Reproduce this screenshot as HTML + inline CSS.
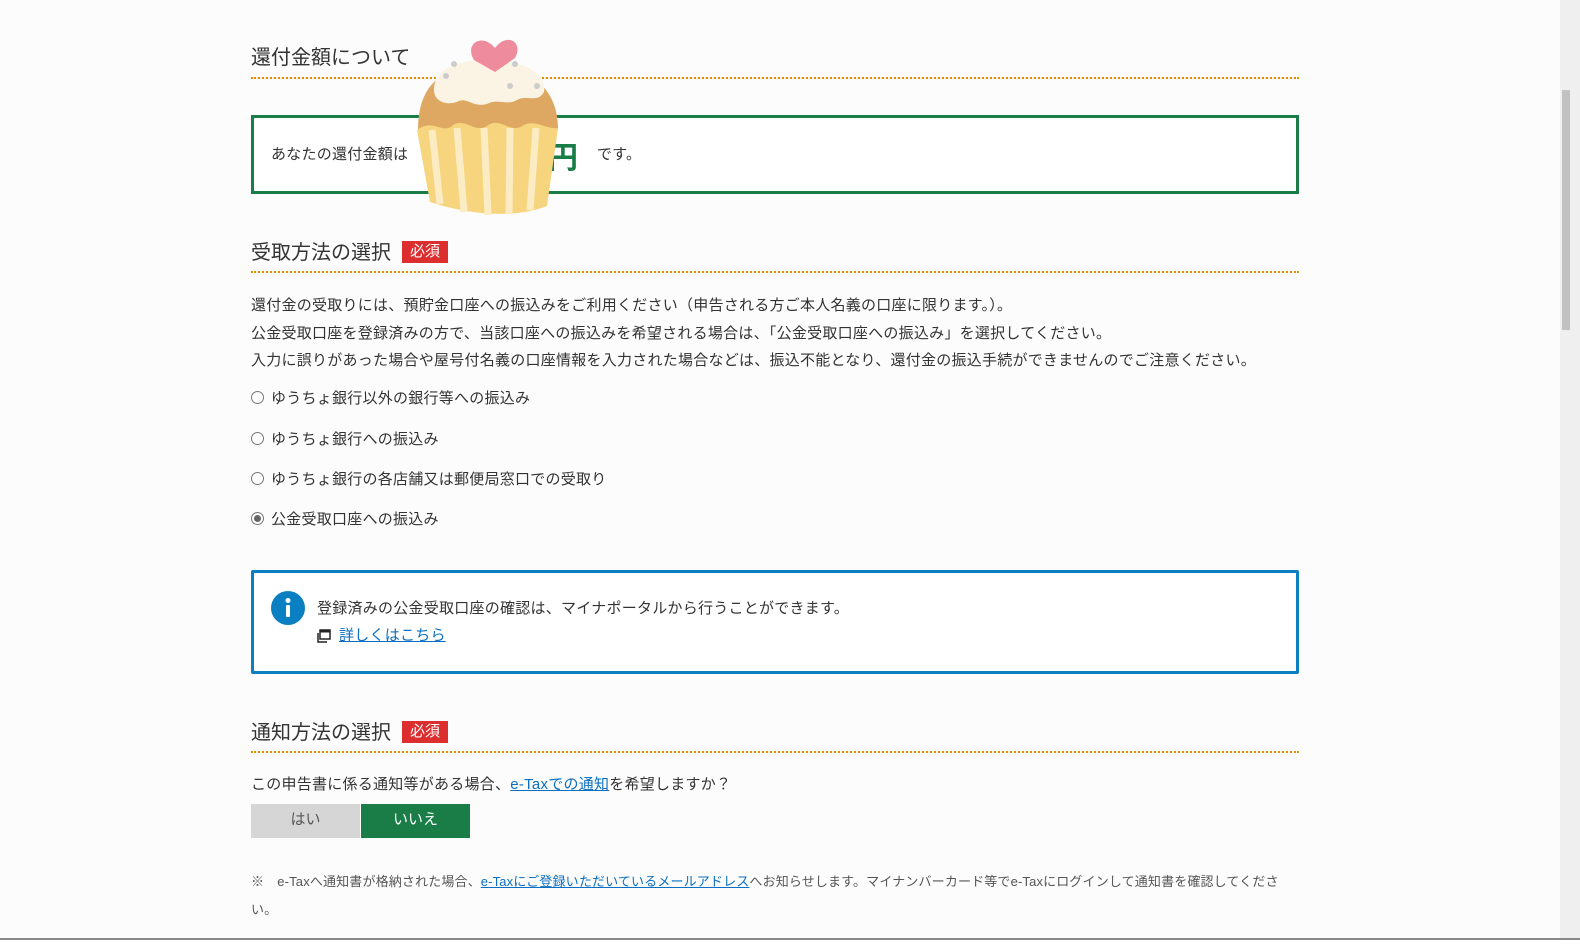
<!DOCTYPE html>
<html><head><meta charset="utf-8"><style>
*{margin:0;padding:0;box-sizing:border-box}
body{width:1580px;height:946px;background:#fcfcfc;font-family:"Liberation Sans","Noto Sans CJK JP",sans-serif;color:#333;position:relative;overflow:hidden}
.a{position:absolute;white-space:nowrap}
h2{position:absolute;font-weight:normal;font-size:20px;color:#333;left:251px}
.dot{position:absolute;left:251px;width:1048px;border-top:2px dotted #e88a00}
.req{display:inline-block;background:#dc2e2e;color:#fff;font-size:15px;padding:0 8px;height:22px;line-height:22px;vertical-align:3px;margin-left:11px}
.t{font-size:15px;letter-spacing:0.25px}
.radio{position:absolute;left:251px;font-size:15px;letter-spacing:0.25px}
.radio i{display:inline-block;width:13px;height:13px;border:1px solid #777;border-radius:50%;vertical-align:-1px;margin-right:7px;background:#fff;position:relative}
.radio i.on:after{content:"";position:absolute;left:2px;top:2px;width:7px;height:7px;border-radius:50%;background:#666}
a{color:#0a6fc2;text-decoration:underline}
</style></head><body>
<h2 style="top:41px">還付金額について</h2>
<div class="dot" style="top:77px"></div>
<div class="a" style="left:251px;top:115px;width:1048px;height:79px;border:3px solid #1a7d48;background:#fff"></div>
<div class="a t" style="left:271px;top:143px">あなたの還付金額は</div>
<div class="a" style="left:548px;top:133px;font-size:30px;font-weight:bold;color:#1a7d48">円</div>
<div class="a t" style="left:597px;top:143px">です。</div>
<svg class="a" style="left:412px;top:30px" width="150" height="190" viewBox="0 0 150 190">
<path d="M6 100 C6 50 35 36 72 36 C115 36 146 55 146 100 Z" fill="#dea862"/>
<path d="M22 60 C22 35 55 30 75 30 C105 30 135 40 132 62 C125 74 115 64 105 70 C95 76 85 68 75 74 C60 78 55 66 45 72 C32 76 22 70 22 60Z" fill="#fbf3e3"/>
<path d="M83 18 C70 2 52 14 62 30 L83 42 L103 28 C112 12 95 2 83 18Z" fill="#ee8b9d"/>
<circle cx="34" cy="46" r="3" fill="#ccc"/><circle cx="42" cy="34" r="3" fill="#ccc"/><circle cx="98" cy="56" r="3" fill="#ccc"/><circle cx="103" cy="34" r="3" fill="#ccc"/><circle cx="125" cy="56" r="3" fill="#ccc"/>
<path d="M5 100 C20 88 30 104 40 96 C52 86 62 104 75 96 C88 86 98 104 110 96 C122 88 135 100 146 98 L135 176 C105 188 60 186 18 172 Z" fill="#f6d57e"/>
<g stroke="#fbecc4" stroke-width="7"><line x1="20" y1="100" x2="28" y2="174"/><line x1="45" y1="98" x2="52" y2="182"/><line x1="72" y1="98" x2="76" y2="185"/><line x1="98" y1="98" x2="97" y2="184"/><line x1="124" y1="98" x2="118" y2="180"/></g>
</svg>
<h2 style="top:236px">受取方法の選択<span class="req">必須</span></h2>
<div class="dot" style="top:271px"></div>
<div class="a t" style="left:251px;top:292px;line-height:27.5px">還付金の受取りには、預貯金口座への振込みをご利用ください（申告される方ご本人名義の口座に限ります。）。<br>公金受取口座を登録済みの方で、当該口座への振込みを希望される場合は、「公金受取口座への振込み」を選択してください。<br>入力に誤りがあった場合や屋号付名義の口座情報を入力された場合などは、振込不能となり、還付金の振込手続ができませんのでご注意ください。</div>
<div class="radio" style="top:387px"><i></i>ゆうちょ銀行以外の銀行等への振込み</div>
<div class="radio" style="top:428px"><i></i>ゆうちょ銀行への振込み</div>
<div class="radio" style="top:468px"><i></i>ゆうちょ銀行の各店舗又は郵便局窓口での受取り</div>
<div class="radio" style="top:508px"><i class="on"></i>公金受取口座への振込み</div>
<div class="a" style="left:251px;top:570px;width:1048px;height:104px;border:3px solid #0a7fc2;border-radius:2px;background:#fff"></div>
<svg class="a" style="left:271px;top:591px" width="34" height="34"><circle cx="17" cy="17" r="17" fill="#0a7fc2"/><circle cx="17" cy="9.5" r="2.5" fill="#fff"/><rect x="15" y="14" width="4" height="12" rx="1" fill="#fff"/></svg>
<div class="a t" style="left:317px;top:597px">登録済みの公金受取口座の確認は、マイナポータルから行うことができます。</div>
<svg class="a" style="left:317px;top:629px" width="14" height="14"><rect x="3" y="1" width="10" height="9" fill="none" stroke="#222" stroke-width="1.5"/><rect x="3" y="1" width="10" height="2.5" fill="#222"/><path d="M1 4 V13 H10" fill="none" stroke="#222" stroke-width="1.5"/></svg>
<div class="a t" style="left:339px;top:624px"><a>詳しくはこちら</a></div>
<h2 style="top:716px">通知方法の選択<span class="req">必須</span></h2>
<div class="dot" style="top:751px"></div>
<div class="a t" style="left:251px;top:773px">この申告書に係る通知等がある場合、<a>e-Taxでの通知</a>を希望しますか？</div>
<div class="a" style="left:251px;top:804px;width:109px;height:34px;background:#d6d6d6;color:#555;font-size:15px;text-align:center;line-height:32px">はい</div>
<div class="a" style="left:361px;top:804px;width:109px;height:34px;background:#1a7d48;color:#fff;font-size:15px;text-align:center;line-height:32px">いいえ</div>
<div class="a" style="left:251px;top:868px;font-size:13px;letter-spacing:0.15px;color:#555;line-height:28px">※　e-Taxへ通知書が格納された場合、<a>e-Taxにご登録いただいているメールアドレス</a>へお知らせします。マイナンバーカード等でe-Taxにログインして通知書を確認してくださ<br>い。</div>
<div class="a" style="left:1560px;top:0;width:20px;height:946px;background:#efefef"></div>
<div class="a" style="left:1562px;top:90px;width:8px;height:240px;background:#c1c1c1"></div>
<div class="a" style="left:0;top:938px;width:1580px;height:2px;background:#888"></div>
<div class="a" style="left:0;top:940px;width:1580px;height:6px;background:#fff"></div>
</body></html>
